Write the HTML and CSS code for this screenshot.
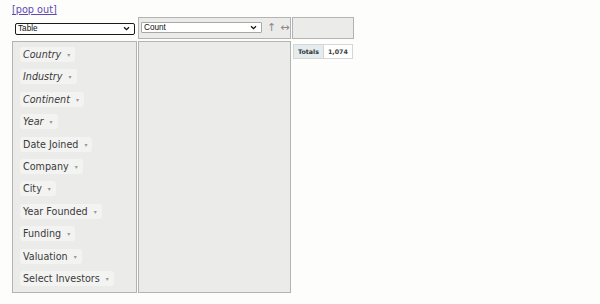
FILE: index.html
```html
<!DOCTYPE html>
<html>
<head>
<meta charset="utf-8">
<link rel="stylesheet" href="styles.css">
</head>
<body>
<div class="popout"><a href="#">[pop out]</a></div>
<div class="pvt-ui">
  <div class="renderer-cell">
    <select class="sel sel-renderer"><option>Table</option></select>
  </div>
  <div class="box vals-box">
    <select class="sel sel-agg"><option>Count</option></select>
    <span class="arrow arrow-up">↑</span>
    <span class="arrow arrow-lr">↔</span>
  </div>
  <div class="box col-axis"></div>
  <div class="box unused">
    <span class="attr filtered">Country <span class="tri">▾</span></span>
    <span class="attr filtered">Industry <span class="tri">▾</span></span>
    <span class="attr filtered">Continent <span class="tri">▾</span></span>
    <span class="attr filtered">Year <span class="tri">▾</span></span>
    <span class="attr">Date Joined <span class="tri">▾</span></span>
    <span class="attr">Company <span class="tri">▾</span></span>
    <span class="attr">City <span class="tri">▾</span></span>
    <span class="attr">Year Founded <span class="tri">▾</span></span>
    <span class="attr">Funding <span class="tri">▾</span></span>
    <span class="attr">Valuation <span class="tri">▾</span></span>
    <span class="attr">Select Investors <span class="tri">▾</span></span>
  </div>
  <div class="box row-axis"></div>
  <div class="output">
    <table class="pvt-table">
      <tr><th>Totals</th><td>1,074</td></tr>
    </table>
  </div>
</div>
</body>
</html>
```

FILE: styles.css
```css
html, body {
  margin: 0;
  padding: 0;
  background: #fdfdfc;
}
body {
  font-family: "DejaVu Sans", Verdana, sans-serif;
  color: #333;
}
.popout {
  padding: 3px 0 0 12px;
  height: 14px;
  line-height: 14px;
  font-size: 9.7px;
}
.popout a {
  color: #6048b0;
  text-decoration: underline;
}
.pvt-ui {
  margin-left: 12px;
  display: grid;
  grid-template-columns: 125px 153px 62px;
  grid-template-rows: 22px 252px;
  column-gap: 1px;
  row-gap: 2px;
  width: max-content;
}
.box {
  box-sizing: border-box;
  border: 1px solid #b3b3b3;
  background: #ebebea;
}
.renderer-cell {
  display: flex;
  align-items: center;
  padding-left: 3px;
  padding-top: 1px;
}
.sel {
  -webkit-appearance: none;
  appearance: none;
  box-sizing: border-box;
  margin: 0;
  font-family: "Liberation Sans", Arial, sans-serif;
  font-size: 8.2px;
  color: #111;
  background-color: #fff;
  background-image: url("data:image/svg+xml,%3Csvg xmlns='http://www.w3.org/2000/svg' width='7' height='5' viewBox='0 0 7 5'%3E%3Cpath d='M1 1.2 L3.5 3.7 L6 1.2' fill='none' stroke='%23111' stroke-width='1.3'/%3E%3C/svg%3E");
  background-repeat: no-repeat;
  background-position: right 4px center;
  background-size: 7px 5px;
  padding: 0 2px;
  line-height: 10px;
  outline: none;
}
.sel-renderer {
  width: 120px;
  height: 12px;
  border: 1.5px solid #1a1a1a;
  border-radius: 2px;
}
.vals-box {
  display: flex;
  align-items: center;
  padding-left: 2px;
}
.sel-agg {
  width: 121px;
  height: 11px;
  border: 1px solid #a8a8a8;
  border-radius: 1px;
  margin-top: -1px;
}
.arrow {
  color: #8a8a8a;
  font-size: 11px;
  line-height: 12px;
}
.arrow-up {
  margin-left: 5px;
}
.arrow-lr {
  margin-left: 4px;
}
.unused {
  display: flex;
  flex-direction: column;
  align-items: flex-start;
  gap: 7.4px;
  padding: 5px 0 0 7px;
}
.attr {
  box-sizing: border-box;
  height: 15px;
  line-height: 15px;
  padding: 0 5px 0 3px;
  background: #f3f3f2;
  border-radius: 3px;
  font-size: 9.6px;
  color: #3a3a3a;
  white-space: nowrap;
}
.attr.filtered {
  font-style: italic;
}
.tri {
  font-style: normal;
  font-size: 6px;
  color: #999;
  margin-left: 3px;
  vertical-align: 1px;
}
.output {
  padding: 3px 0 0 1px;
}
.pvt-table {
  border-collapse: collapse;
  font-family: "DejaVu Sans", Verdana, sans-serif;
  font-size: 6.3px;
}
.pvt-table th,
.pvt-table td {
  border: 1px solid #d6d6d6;
  height: 13px;
  padding: 0 4px;
  line-height: 13px;
  font-weight: bold;
}
.pvt-table th {
  background: #e4ecef;
  color: #333;
  padding: 0 4px 0 4px;
}
.pvt-table td {
  background: #fff;
  color: #3d3d3d;
  text-align: right;
}
```
